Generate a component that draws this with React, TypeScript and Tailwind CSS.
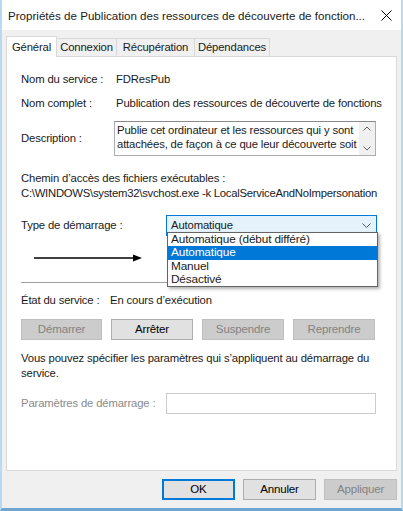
import React from "react";

const font = { fontFamily: '"Liberation Sans", Arial, sans-serif' };

function Btn({ label, disabled, primary, w }: { label: string; disabled?: boolean; primary?: boolean; w: string }) {
  const base = "h-[21px] flex items-center justify-center text-[11.5px] border " + w + " ";
  if (disabled) return <div className={base + "bg-[#cccccc] border-[#bfbfbf] text-[#838383]"}>{label}</div>;
  if (primary) return <div className={base + "bg-[#e1e1e1] border-[#0078d7] text-black outline outline-1 outline-[#0078d7] -outline-offset-2"}>{label}</div>;
  return <div className={base + "bg-[#e1e1e1] border-[#adadad] text-black"}>{label}</div>;
}

export default function App() {
  return (
    <div style={font} className="w-[403px] h-[511px] bg-[#f0f0f0] border-l-2 border-r-2 border-b-[3px] border-l-[#b9d9ef] border-r-[#b9d9ef] border-b-[#6ea6d3] flex flex-col text-[11.3px] tracking-[-0.15px] text-[#1a1a1a] leading-[15px] overflow-hidden">
      {/* Title bar */}
      <div className="h-[30px] bg-white flex items-center justify-between pl-[6px] pr-[9px] shrink-0">
        <span className="text-[11.6px] tracking-normal whitespace-nowrap">Propriétés de Publication des ressources de découverte de fonction...</span>
        <svg width="11" height="11" viewBox="0 0 11 11">
          <path d="M0.5 0.5 L10.5 10.5 M10.5 0.5 L0.5 10.5" stroke="#000" strokeWidth="1" />
        </svg>
      </div>
      {/* Tabs */}
      <div className="flex items-end pl-[4px] pt-[6px] h-[26px] shrink-0">
        <div className="w-[51px] h-[21px] bg-white border border-b-0 border-[#d9d9d9] flex justify-center pt-[3px] relative z-10 -mb-px">Général</div>
        <div className="w-[60px] h-[18px] border border-l-0 border-[#d9d9d9] border-b-0 flex items-center justify-center">Connexion</div>
        <div className="w-[78px] h-[18px] border border-l-0 border-[#d9d9d9] border-b-0 flex items-center justify-center">Récupération</div>
        <div className="w-[75px] h-[18px] border border-l-0 border-[#d9d9d9] border-b-0 flex items-center justify-center">Dépendances</div>
      </div>
      {/* Panel */}
      <div className="mx-[4px] h-[415px] bg-white border border-[#d9d9d9] shrink-0 pl-[14px] pr-[18px] pt-[15px] relative">
        <div className="flex h-[15px]"><span className="w-[95px] shrink-0">Nom du service :</span><span>FDResPub</span></div>
        <div className="flex h-[15px] mt-[9px]"><span className="w-[95px] shrink-0">Nom complet :</span><span className="whitespace-nowrap">Publication des ressources de découverte de fonctions</span></div>
        <div className="flex mt-[10px]">
          <span className="w-[93px] shrink-0 pt-[10px]">Description :</span>
          <div className="w-[262px] h-[35px] border border-[#abadb3] border-t-[#8a8a8a] flex">
            <div className="flex-1 pl-[2px] pt-[1px] leading-[14px] whitespace-nowrap overflow-hidden">Publie cet ordinateur et les ressources qui y sont<br />attachées, de façon à ce que leur découverte soit</div>
            <div className="w-[16px] bg-[#f0f0f0] flex flex-col items-center justify-between py-[4px]">
              <svg width="8" height="5" viewBox="0 0 8 5"><path d="M0.5 4.5 L4 1 L7.5 4.5" stroke="#606060" fill="none" /></svg>
              <svg width="8" height="5" viewBox="0 0 8 5"><path d="M0.5 0.5 L4 4 L7.5 0.5" stroke="#606060" fill="none" /></svg>
            </div>
          </div>
        </div>
        <div className="mt-[15px] h-[15px]">Chemin d’accès des fichiers exécutables :</div>
        <div className="h-[15px] whitespace-nowrap tracking-[-0.25px]">C:\WINDOWS\system32\svchost.exe -k LocalServiceAndNoImpersonation</div>
        <div className="flex mt-[14px] items-center">
          <span className="w-[145px] shrink-0">Type de démarrage :</span>
          <div className="w-[211px] h-[21px] bg-[#e5f1fb] border border-[#0078d7] flex items-center justify-between pl-[4px] pr-[5px]">
            <span>Automatique</span>
            <svg width="9" height="5" viewBox="0 0 9 5"><path d="M0.5 0.5 L4.5 4.5 L8.5 0.5" stroke="#555" fill="none" /></svg>
          </div>
        </div>
        <div className="flex items-center h-[44px]">
          <svg width="110" height="10" viewBox="0 0 110 10" className="ml-[13px]">
            <line x1="0" y1="5" x2="100" y2="5" stroke="#000" strokeWidth="1.5" />
            <path d="M99 1.5 L108 5 L99 8.5 Z" fill="#000" />
          </svg>
        </div>
        <div className="h-px bg-[#a0a0a0] mt-[2px]" />
        <div className="flex h-[15px] mt-[10px]"><span className="w-[89px] shrink-0">État du service :</span><span>En cours d’exécution</span></div>
        <div className="flex mt-[11px] gap-[9px]">
          <Btn label="Démarrer" disabled w="w-[81px]" />
          <Btn label="Arrêter" w="w-[82px]" />
          <Btn label="Suspendre" disabled w="w-[82px]" />
          <Btn label="Reprendre" disabled w="w-[82px]" />
        </div>
        <div className="mt-[11px] leading-[15px]">Vous pouvez spécifier les paramètres qui s’appliquent au démarrage du<br />service.</div>
        <div className="flex items-center mt-[12px]">
          <span className="w-[145px] shrink-0 text-[#8a8a8a] whitespace-nowrap">Paramètres de démarrage :</span>
          <div className="w-[210px] h-[21px] border border-[#cccccc] bg-white" />
        </div>
        {/* Dropdown list overlay */}
        <div className="absolute left-[160px] top-[175px] w-[211px] bg-white border border-[#646464] shadow-[2px_2px_3px_rgba(0,0,0,0.3)] leading-[13px] text-[11.8px]">
          <div className="pl-[3px] h-[13px] whitespace-nowrap">Automatique (début différé)</div>
          <div className="pl-[3px] h-[14px] bg-[#0078d7] text-white">Automatique</div>
          <div className="pl-[3px] h-[13px]">Manuel</div>
          <div className="pl-[3px] h-[13px]">Désactivé</div>
        </div>
      </div>
      {/* Bottom buttons */}
      <div className="flex justify-end gap-[8px] pr-[4px] pt-[8px]">
        <Btn label="OK" primary w="w-[73px]" />
        <Btn label="Annuler" w="w-[73px]" />
        <Btn label="Appliquer" disabled w="w-[73px]" />
      </div>
    </div>
  );
}
